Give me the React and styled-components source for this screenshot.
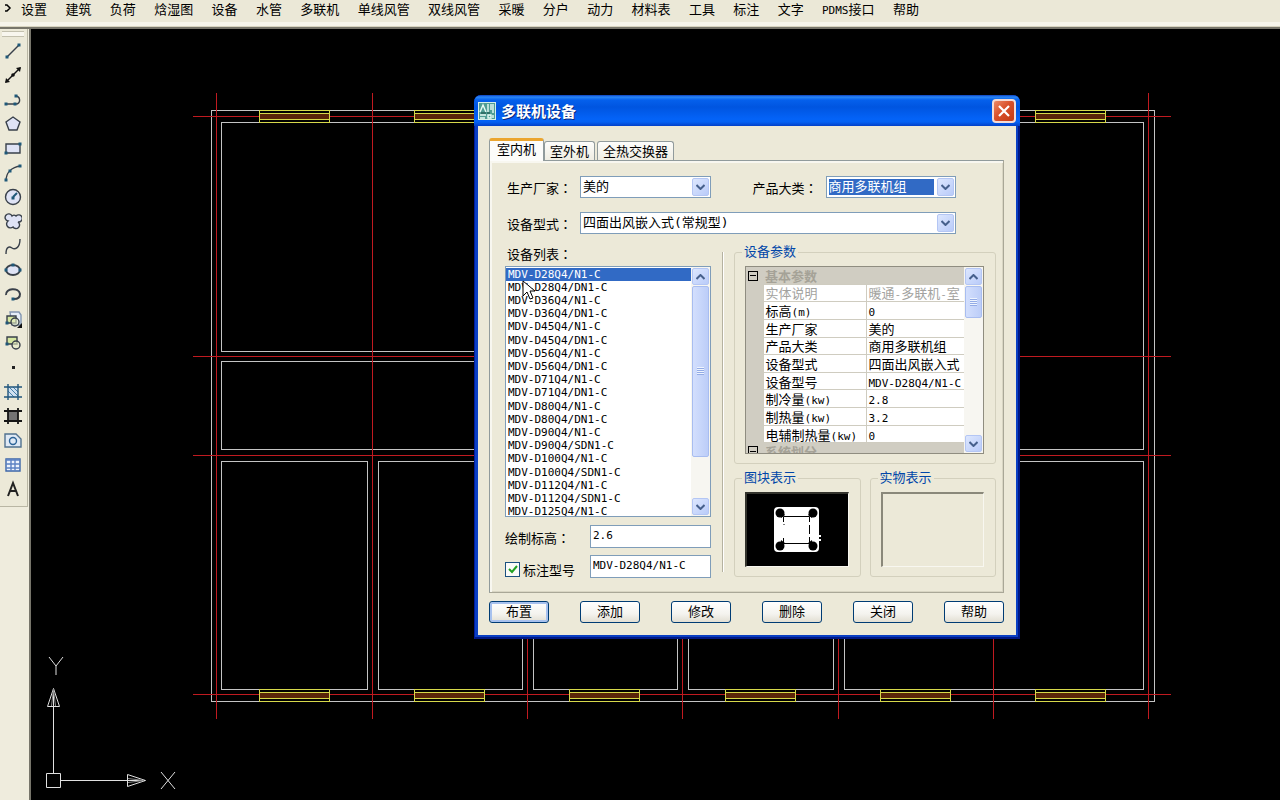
import React from 'react';
import styled, { createGlobalStyle, css } from 'styled-components';

const GlobalStyle = createGlobalStyle`
  * {
    box-sizing: border-box;
  }
  body {
    margin: 0;
    background: #000;
    color: #000;
    font-family: "Noto Sans CJK SC", "Liberation Sans", sans-serif;
    font-size: 13px;
    line-height: 16px;
    overflow: hidden;
  }
  button, input, select {
    font: inherit;
    color: inherit;
    margin: 0;
  }
`;

const mono = css`
  font-family: "DejaVu Sans Mono", "Noto Sans CJK SC", monospace;
`;

const Page = styled.div`
  display: flex;
  flex-direction: column;
  height: 100vh;
`;

/* ---------- menu ---------- */

const MenuBar = styled.header`
  display: flex;
  height: 29px;
  padding: 0 0 0 4px;
  background: linear-gradient(#ebe8d7 0 22px, #f6f4ea 22px 26px, #d8d4c0 26px);
  border-bottom: 2px solid #77756a;
`;

const MenuArrow = styled.svg`
  flex: none;
  width: 8px;
  height: 14px;
  margin: 1px 9px 0 0;
`;

const MenuItems = styled.nav`
  display: flex;
  justify-content: space-between;
  width: 898px;
  height: 17px;
`;

const MenuButton = styled.button`
  border: 0;
  padding: 0;
  background: none;
  line-height: 16px;
  white-space: nowrap;
`;

const Latin = styled.span`
  ${mono}
  font-size: 11px;
  line-height: 1;
`;

/* ---------- work area ---------- */

const Work = styled.div`
  display: flex;
  flex: 1;
  min-height: 0;
`;

const Side = styled.aside`
  flex: none;
  width: 31px;
  background: #efecdd;
  border-right: 2px solid #77756a;
`;

const ToolBar = styled.div`
  display: flex;
  flex-direction: column;
  width: 28px;
  padding: 2px 3px 6px 2px;
  background: #ece9d8;
  border-right: 1px solid #b9b6a4;
  border-bottom: 1px solid #b9b6a4;
`;

const Grip = styled.div`
  height: 6px;
  margin-bottom: 3px;
  border: 1px solid #c3c0ae;
  border-width: 1px 0;
  background: #f8f6ee;
`;

const Tools = styled.div`
  display: flex;
  flex-direction: column;
  justify-content: space-between;
  align-items: center;
  height: 460px;
`;

const ToolButton = styled.button`
  width: 22px;
  height: 22px;
  padding: 2px;
  border: 0;
  background: none;
  svg {
    display: block;
    width: 18px;
    height: 18px;
    fill: none;
    stroke: #39404a;
    stroke-width: 1.4;
  }
`;

const Canvas = styled.main`
  position: relative;
  flex: 1;
  background: #000;
  overflow: hidden;
`;

const Plan = styled.svg`
  display: block;
  width: 100%;
  height: 100%;
`;

/* ---------- dialog ---------- */

const Dialog = styled.section`
  position: absolute;
  left: 443px;
  top: 66px;
  width: 546px;
  padding: 0 4px 4px;
  border-radius: 7px 7px 0 0;
  background: #0a3fc4;
  box-shadow: inset 1px 0 #001c9c, inset -2px -2px #001884;
`;

const TitleBar = styled.div`
  display: flex;
  align-items: center;
  height: 31px;
  margin: 0 -4px;
  padding: 0 4px;
  border-radius: 7px 7px 0 0;
  background: linear-gradient(#0b3fc0 0, #2a86f5 2px, #0560ec 5px, #0055e0 12px, #0463f8 24px, #0561f2 27px, #0340c8 31px);
`;

const Title = styled.h1`
  flex: 1;
  margin: 0 0 0 5px;
  color: #fff;
  font-size: 15px;
  font-weight: 700;
  text-shadow: 1px 1px #0a2a80;
`;

const CloseButton = styled.button`
  display: flex;
  align-items: center;
  justify-content: center;
  width: 24px;
  height: 24px;
  padding: 0;
  border: 2px solid #f4dcd6;
  border-radius: 4px;
  background: linear-gradient(135deg, #ec8a68, #d9502a 45%, #c23a14);
`;

const Body = styled.div`
  padding: 12px 12px 12px 11px;
  background: #ece9d8;
`;

const Tabs = styled.div`
  display: flex;
  align-items: flex-end;
  height: 22px;
`;

const Tab = styled.button`
  height: 19px;
  margin-right: 2px;
  padding: 0 5px;
  border: 1px solid #919b9c;
  border-bottom: 0;
  border-radius: 3px 3px 0 0;
  background: linear-gradient(#fdfdfb, #efede2);
  line-height: 16px;
  ${({ $active }) => $active && css`
    position: relative;
    height: 23px;
    margin: 0 0 -1px;
    padding: 0 7px 4px;
    border-top: 3px solid #eba52f;
    background: #fcfcfa;
  `}
`;

const Panel = styled.div`
  padding: 15px 7px 14px 15px;
  border: 1px solid #919b9c;
  border-color: #919b9c #a9a797 #a9a797 #919b9c;
  background: #ece9d8;
  box-shadow: inset 2px 2px #f8f7f0, inset -1px -1px #d9d6c4;
`;

const FormRow = styled.div`
  display: flex;
  align-items: center;
  margin-bottom: ${({ $last }) => ($last ? 12 : 14)}px;
`;

const Label = styled.label`
  flex: none;
  width: ${({ $wide }) => ($wide ? 85 : 75)}px;
  padding-left: ${({ $wide }) => ($wide ? 0 : 2)}px;
  padding-top: 2px;
`;

/* full-width colon sits in the middle of its square */
const Colon = styled.span`
  font-family: "Noto Sans CJK TC", sans-serif;
  line-height: 1;
`;

const SelectBox = styled.div`
  position: relative;
  width: ${({ $wide }) => ($wide ? 376 : 131)}px;
  margin-right: ${({ $wide }) => ($wide ? 0 : 40)}px;
`;

const Select = styled.select`
  ${mono}
  display: block;
  width: 100%;
  height: 22px;
  padding: 2px 21px 2px 2px;
  border: 1px solid #7f9db9;
  border-radius: 0;
  outline: 0;
  appearance: none;
  background: #fff;
  line-height: 16px;
  ${({ $focused }) => $focused && css`
    color: #fff;
    background: linear-gradient(#316ac5, #316ac5) content-box, #fff;
  `}
`;

const arrowFace = css`
  display: flex;
  align-items: center;
  justify-content: center;
  border: 1px solid #b4c6f4;
  border-radius: 2px;
  background: linear-gradient(135deg, #dde7fe, #b9cbf9);
`;

const SelectArrow = styled.span`
  ${arrowFace}
  position: absolute;
  top: 2px;
  right: 2px;
  width: 17px;
  height: 18px;
  pointer-events: none;
`;

const Columns = styled.div`
  display: grid;
  grid-template-columns: 206px 1px 1fr;
  column-gap: 11px;
`;

const Divider = styled.div`
  margin: 6px 0;
  background: #b5b2a0;
  box-shadow: 1px 0 #fff;
`;

const LeftColumn = styled.div`
  display: flex;
  flex-direction: column;
`;

const ListLabel = styled.label`
  height: 16px;
  margin-bottom: 4px;
  padding-left: 2px;
`;

const ListFrame = styled.div`
  display: flex;
  height: 251px;
  margin-bottom: 8px;
  border: 1px solid #7f9db9;
  background: #fff;
`;

const List = styled.select`
  ${mono}
  flex: 1;
  height: 249px;
  padding: 1px 0;
  border: 0;
  outline: 0;
  overflow: hidden;
  background: #fff;
  font-size: 11px;
  scrollbar-width: none;
  option {
    height: 13px;
    min-height: 13px;
    padding: 0 2px;
    line-height: 13px;
  }
  option:nth-child(5n) {
    height: 14px;
  }
  option:checked {
    color: #fff;
    background: #316ac5 linear-gradient(#316ac5, #316ac5);
  }
`;

const ScrollBar = styled.div`
  display: flex;
  flex-direction: column;
  flex: none;
  width: 19px;
  padding: 1px;
  background: #f7f6f1;
`;

const ScrollButton = styled.button`
  ${arrowFace}
  flex: none;
  width: 17px;
  height: 17px;
  padding: 0;
`;

const ScrollTrack = styled.div`
  flex: 1;
  padding: 1px 0;
`;

const ScrollThumb = styled.div`
  display: flex;
  align-items: center;
  justify-content: center;
  height: ${({ $size }) => $size};
  border: 1px solid #a8bdf0;
  border-radius: 2px;
  background: linear-gradient(90deg, #d3dffd, #bccdf8);
  &::before {
    content: "";
    width: 7px;
    height: 8px;
    background: repeating-linear-gradient(#eef4fe 0 1px, #93abe6 1px 2px);
  }
`;

const InputRow = styled.div`
  display: flex;
  align-items: center;
  & + & {
    margin-top: 7px;
  }
`;

const CheckLabel = styled.label`
  display: flex;
  align-items: center;
  gap: 3px;
  flex: none;
  width: 85px;
  padding-top: 6px;
`;

const CheckBox = styled.input`
  appearance: none;
  width: 15px;
  height: 15px;
  border: 1px solid #1c5180;
  background: #fbfbf8 url("data:image/svg+xml,%3Csvg xmlns='http://www.w3.org/2000/svg' viewBox='0 0 13 13'%3E%3Cpath d='M3 6l3 3 5-6' fill='none' stroke='%2321a121' stroke-width='2'/%3E%3C/svg%3E");
`;

const TextInput = styled.input`
  ${mono}
  flex: 1;
  min-width: 0;
  height: 23px;
  padding: 0 2px 3px;
  border: 1px solid #7f9db9;
  background: #fff;
  && {
    font-size: 11px;
  }
`;

const RightColumn = styled.div`
  display: grid;
  grid-template-columns: 1fr 1fr;
  align-content: start;
  gap: 8px 9px;
`;

const Group = styled.fieldset`
  min-width: 0;
  margin: 0;
  padding: 7px 11px 9px 10px;
  border: 1px solid #d3d0bd;
  border-radius: 3px;
  ${({ $full }) => $full && 'grid-column: 1 / -1;'}
`;

const Legend = styled.legend`
  height: 13px;
  margin-left: -3px;
  padding: 0 2px;
  color: #0046a8;
  line-height: 10px;
`;

const GridFrame = styled.div`
  display: flex;
  height: 188px;
  border: 1px solid #8f8d80;
  overflow: hidden;
  background: #fff;
`;

const ParamTable = styled.table`
  flex: 1;
  min-width: 0;
  height: 193px;
  table-layout: fixed;
  border-collapse: collapse;
  td, th {
    height: 15px;
    padding: 0 0 0 2px;
    font-weight: 400;
    line-height: 15px;
    text-align: left;
    white-space: nowrap;
  }
`;

const Gutter = styled.col`
  width: 17px;
`;

const NameCol = styled.col`
  width: 103px;
`;

const GroupRow = styled.tr`
  background: #d0cdc2;
  && th {
    color: #a5a297;
    font-weight: 700;
  }
`;

const ParamRow = styled.tr`
  color: ${({ $muted }) => ($muted ? '#a3a3a0' : '#000')};
  td:first-child {
    background: #d0cdc2;
  }
  th, td:last-child {
    border: 1px solid #cfccc0;
    border-right: 0;
  }
`;

const Toggle = styled.button`
  display: block;
  width: 10px;
  height: 10px;
  padding: 0;
  border: 1px solid #000;
  background: none;
  &::before {
    content: "";
    display: block;
    height: 1px;
    margin: 0 1px;
    background: #000;
  }
`;

const Preview = styled.div`
  display: flex;
  justify-content: center;
  align-items: center;
  height: 75px;
  background: ${({ $dark }) => ($dark ? '#000' : '#ece9d8')};
  border: 1px solid #f8f7f0;
  border-top: 2px solid ${({ $dark }) => ($dark ? '#33332c' : '#8a887a')};
  border-left: 2px solid ${({ $dark }) => ($dark ? '#33332c' : '#8a887a')};
`;

const Buttons = styled.div`
  display: flex;
  justify-content: space-between;
  margin-top: 8px;
`;

const PushButton = styled.button`
  width: 60px;
  height: 22px;
  padding: 0 0 2px;
  border: 1px solid #003c74;
  border-radius: 3px;
  background: linear-gradient(#fff, #f4f3ee 60%, #e2dfd3);
  line-height: 18px;
  ${({ $primary }) => $primary && 'box-shadow: inset 0 0 0 2px #a7c1ee;'}
`;

const Cursor = styled.svg`
  position: absolute;
  left: 48px;
  top: 185px;
  width: 14px;
  height: 22px;
  pointer-events: none;
`;

const menuItems = [
  '设置', '建筑', '负荷', '焓湿图', '设备', '水管', '多联机', '单线风管', '双线风管',
  '采暖', '分户', '动力', '材料表', '工具', '标注', '文字', 'PDMS接口', '帮助',
];

const models = [
  'MDV-D28Q4/N1-C', 'MDV-D28Q4/DN1-C', 'MDV-D36Q4/N1-C', 'MDV-D36Q4/DN1-C',
  'MDV-D45Q4/N1-C', 'MDV-D45Q4/DN1-C', 'MDV-D56Q4/N1-C', 'MDV-D56Q4/DN1-C',
  'MDV-D71Q4/N1-C', 'MDV-D71Q4/DN1-C', 'MDV-D80Q4/N1-C', 'MDV-D80Q4/DN1-C',
  'MDV-D90Q4/N1-C', 'MDV-D90Q4/SDN1-C', 'MDV-D100Q4/N1-C', 'MDV-D100Q4/SDN1-C',
  'MDV-D112Q4/N1-C', 'MDV-D112Q4/SDN1-C', 'MDV-D125Q4/N1-C',
];

const params = [
  ['实体说明', '暖通-多联机-室'],
  ['标高(m)', '0'],
  ['生产厂家', '美的'],
  ['产品大类', '商用多联机组'],
  ['设备型式', '四面出风嵌入式'],
  ['设备型号', 'MDV-D28Q4/N1-C'],
  ['制冷量(kw)', '2.8'],
  ['制热量(kw)', '3.2'],
  ['电辅制热量(kw)', '0'],
];

const Dot = ({ x, y }) => <rect x={x - 1.5} y={y - 1.5} width="3" height="3" fill="#1f5878" stroke="none" />;

const tools = [
  ['直线', <><path d="M3 15L15 3" /><Dot x={3} y={15} /><Dot x={15} y={3} /></>],
  ['构造线', <><path d="M2 16L16 2" stroke="#111" /><path d="M1 17l1-5 4 4zM17 1l-5 1 4 4z" fill="#111" stroke="none" /><circle cx="9" cy="9" r="1.8" fill="#111" stroke="none" /></>],
  ['多段线', <><path d="M2 13h10c5 0 5-8-1-8" /><Dot x={2} y={13} /><Dot x={11} y={13} /><Dot x={12} y={5} /></>],
  ['正多边形', <path d="M9 2l7 5-3 8H5L2 7z" fill="#dfe3f5" />],
  ['矩形', <><path d="M2 5h14v9H2z" fill="#dfe3f5" /><Dot x={2} y={14} /><Dot x={16} y={5} /></>],
  ['圆弧', <><path d="M2 17C2 9 7 3 17 2" /><Dot x={2} y={16} /><Dot x={6} y={7} /><Dot x={16} y={2} /></>],
  ['圆', <><circle cx="9" cy="9" r="7.5" fill="#dfe3f5" /><path d="M9 9l4-4" stroke="#1f5878" strokeWidth="2" /><Dot x={9} y={10} /></>],
  ['修订云线', <path d="M8 4A3.6 3.6 0 1 0 4 9a3.6 3.6 0 1 0 5 6 3.6 3.6 0 1 0 5-5 3.6 3.6 0 1 0-2-6 3 3 0 0 0-4 0z" fill="#dfe3f5" />],
  ['样条曲线', <path d="M2 17c0-7 3-8 6-6s8 0 8-9" />],
  ['椭圆', <><ellipse cx="9" cy="9" rx="7" ry="5" fill="#dfe3f5" strokeWidth="2" /><Dot x={2} y={9} /><Dot x={9} y={4} /><Dot x={16} y={9} /></>],
  ['椭圆弧', <><path d="M2 10c-1-7 13-8 14-1 0 4-3 5-6 5" strokeWidth="2" /><Dot x={9} y={14} /></>],
  ['插入块', <><path d="M6 2h9l2 3v10H8z" fill="#e6eef8" stroke="#8295b0" /><path d="M3 6h9v7H3z" fill="#d5e7a0" /><circle cx="11" cy="12" r="4" fill="#e9f0c8" fillOpacity=".6" /><Dot x={3} y={13} /><path d="M18 13v5h-5z" fill="#111" stroke="none" /></>],
  ['创建块', <><path d="M3 3h10v7H3z" fill="#d5e7a0" /><circle cx="12" cy="11" r="4" fill="#e9f0c8" fillOpacity=".6" /><Dot x={3} y={10} /></>],
  ['点', <rect x="8" y="8" width="3" height="3" fill="#222" stroke="none" />],
  ['图案填充', <><path d="M4 4h10v10H4z" fill="#cfe0f0" stroke="none" /><path d="M5 4l9 9M9 4l5 5M4 8l6 6" stroke="#4680aa" strokeWidth="1" /><path d="M4 1v16M14 1v16M0 4h18M0 14h18" stroke="#20557c" /></>],
  ['渐变色', <><path d="M4 4h10v10H4z" fill="#737373" stroke="none" /><path d="M4 1v16M14 1v16M0 4h18M0 14h18" stroke="#161616" strokeWidth="1.8" /></>],
  ['面域', <><path d="M1 3h11l5 5v8H1z" fill="#dfe9f5" stroke="#50718f" /><circle cx="9" cy="10" r="3.5" stroke="#2c6498" /></>],
  ['表格', <><path d="M2 3h14v12H2z" fill="#eef4fd" stroke="#3c65a8" /><path d="M2 4h14M2 8h14M2 12h14M7 3v12M11 3v12" stroke="#5c82c4" /></>],
  ['多行文字', <path d="M4 16L9 3l5 13M6 11h6" stroke="#222" strokeWidth="2" />],
];

// [x, top end]: the inner axes only cross the lower rooms
const axisX = [[216, 93], [372, 93], [527, 455], [682, 455], [838, 455], [993, 455], [1148, 93]];
const axisY = [116, 356, 455, 694];
const windowsX = [259, 414, 569, 725, 880, 1035];
const rooms = [
  [221, 461, 146], [378, 461, 144], [533, 461, 144], [688, 461, 145], [844, 461, 299],
];

const Chevron = ({ up }) => (
  <svg width="9" height="6" viewBox="0 0 9 6">
    <path d={up ? 'M0.5 5l4-4 4 4' : 'M0.5 1l4 4 4-4'} fill="none" stroke="#46608c" strokeWidth="2" />
  </svg>
);

const Mixed = ({ text }) =>
  text.split(/([\x21-\x7e]+)/).map((part, i) => (i % 2 ? <Latin key={i}>{part}</Latin> : part));

const WallWindow = ({ x, y }) => (
  <g stroke="#d6d84a">
    <rect x={x + 0.5} y={y + 3.5} width="70" height="6" fill="#5a2408" />
    <rect x={x + 0.5} y={y + 0.5} width="70" height="12" fill="none" />
  </g>
);

const FloorPlan = () => (
  <Plan viewBox="31 29 1249 771" preserveAspectRatio="xMinYMin meet" shapeRendering="crispEdges">
    <g stroke="#c4c4c4" fill="none">
      <rect x="211.5" y="110.5" width="943" height="591" />
      <path d="M480 351.5H221.5V122.5H1143.5V449.5H221.5V361.5H480" />
      {rooms.map(([x, y, w]) => <rect key={x} x={x + 0.5} y={y + 0.5} width={w} height="228" />)}
    </g>
    <g stroke="#c01a20">
      {axisX.map(([x, top]) => <path key={x} d={`M${x + 0.5} ${top}V719`} />)}
      {axisY.map((y) => <path key={y} d={`M193 ${y + 0.5}H1171`} />)}
    </g>
    {windowsX.map((x) => (
      <g key={x}>
        <WallWindow x={x} y={110} />
        <WallWindow x={x} y={689} />
      </g>
    ))}
    <g stroke="#e0e0e0" fill="none" shapeRendering="auto">
      <path d="M46.5 773.5h14v14h-14zM53.5 773V690M61 780.5h84M47.5 706.5l6-18 6 18zM127.5 774.5l18 6-18 6z" />
      <path d="M51.5 706l2-17 2 17M128 778.5l16 2-16 2" stroke="#888" />
      <path d="M49 657l7 9 7-9M56 666v9M161 772l14 17M175 772l-14 17" />
    </g>
  </Plan>
);

const Combo = ({ id, value, wide, focused }) => (
  <SelectBox $wide={wide}>
    <Select id={id} $focused={focused} defaultValue={value}>
      <option>{value}</option>
    </Select>
    <SelectArrow><Chevron /></SelectArrow>
  </SelectBox>
);

const Scroll = ({ size }) => (
  <ScrollBar>
    <ScrollButton aria-label="向上"><Chevron up /></ScrollButton>
    <ScrollTrack><ScrollThumb $size={size} /></ScrollTrack>
    <ScrollButton aria-label="向下"><Chevron /></ScrollButton>
  </ScrollBar>
);

const ParamGrid = () => (
  <GridFrame>
    <ParamTable>
      <colgroup><Gutter /><NameCol /><col /></colgroup>
      <tbody>
        <GroupRow>
          <td><Toggle aria-label="折叠" /></td>
          <th colSpan="2">基本参数</th>
        </GroupRow>
        {params.map(([name, value], i) => (
          <ParamRow key={name} $muted={i === 0}>
            <td />
            <th scope="row"><Mixed text={name} /></th>
            <td><Mixed text={value} /></td>
          </ParamRow>
        ))}
        <GroupRow>
          <td><Toggle aria-label="折叠" /></td>
          <th colSpan="2">系统划分</th>
        </GroupRow>
      </tbody>
    </ParamTable>
    <Scroll size="32px" />
  </GridFrame>
);

const BlockSymbol = () => (
  <svg width="50" height="48" viewBox="0 0 50 48">
    <rect x="2" y="1" width="45" height="45" rx="4" fill="#fff" />
    <g fill="#000">
      <circle cx="8" cy="7" r="4.5" />
      <circle cx="41" cy="7" r="4.5" />
      <circle cx="8" cy="40" r="4.5" />
      <circle cx="41" cy="40" r="4.5" />
      <path d="M8 3l5 6-4 3zM41 3l-5 6 4 3zM8 44l5-7-4-3zM41 44l-5-7 4-3z" />
    </g>
    <path d="M11.5 16v-5.5h26V16M37.5 19v9M37.5 31v6.5h-26V32M12 18v1" fill="none" stroke="#000" />
    <path d="M47 29h2v2h-2zM47 33h2v2h-2z" fill="#fff" />
  </svg>
);

const AppIcon = () => (
  <svg width="18" height="18" viewBox="0 0 18 18">
    <path d="M0 0h18v18H0z" fill="#d5eee8" />
    <path d="M1 1h16v16H1z" fill="#4f9d95" />
    <path d="M2 10l3-7 3 7M10 2v8M13 2v6M15 2v9M2 13h6M2 16h5M10 13h3v3h-3zM15 13v3" fill="none" stroke="#e9fbf6" strokeWidth="1.4" />
    <path d="M3 11h5M9 11h3" stroke="#12443f" />
  </svg>
);

const DeviceDialog = () => (
  <Dialog role="dialog" aria-labelledby="dialog-title">
    <TitleBar>
      <AppIcon />
      <Title id="dialog-title">多联机设备</Title>
      <CloseButton aria-label="关闭">
        <svg width="12" height="12" viewBox="0 0 12 12">
          <path d="M1 1l10 10M11 1L1 11" stroke="#fff" strokeWidth="2.2" />
        </svg>
      </CloseButton>
    </TitleBar>
    <Body>
      <Tabs role="tablist">
        <Tab role="tab" aria-selected="true" $active>室内机</Tab>
        <Tab role="tab">室外机</Tab>
        <Tab role="tab">全热交换器</Tab>
      </Tabs>
      <Panel>
        <FormRow>
          <Label htmlFor="maker">生产厂家<Colon>：</Colon></Label>
          <Combo id="maker" value="美的" />
          <Label htmlFor="category">产品大类<Colon>：</Colon></Label>
          <Combo id="category" value="商用多联机组" focused />
        </FormRow>
        <FormRow $last>
          <Label htmlFor="type">设备型式<Colon>：</Colon></Label>
          <Combo id="type" value="四面出风嵌入式(常规型)" wide />
        </FormRow>
        <Columns>
          <LeftColumn>
            <ListLabel htmlFor="models">设备列表<Colon>：</Colon></ListLabel>
            <ListFrame>
              <List id="models" size="19" defaultValue={models[0]}>
                {models.map((m) => <option key={m}>{m}</option>)}
              </List>
              <Scroll size="81%" />
            </ListFrame>
            <InputRow>
              <Label htmlFor="height" $wide>绘制标高<Colon>：</Colon></Label>
              <TextInput id="height" defaultValue="2.6" />
            </InputRow>
            <InputRow>
              <CheckLabel>
                <CheckBox type="checkbox" defaultChecked />
                标注型号
              </CheckLabel>
              <TextInput aria-label="标注型号" defaultValue="MDV-D28Q4/N1-C" />
            </InputRow>
          </LeftColumn>
          <Divider />
          <RightColumn>
            <Group $full>
              <Legend>设备参数</Legend>
              <ParamGrid />
            </Group>
            <Group>
              <Legend>图块表示</Legend>
              <Preview $dark><BlockSymbol /></Preview>
            </Group>
            <Group>
              <Legend>实物表示</Legend>
              <Preview />
            </Group>
          </RightColumn>
        </Columns>
      </Panel>
      <Buttons>
        <PushButton $primary>布置</PushButton>
        <PushButton>添加</PushButton>
        <PushButton>修改</PushButton>
        <PushButton>删除</PushButton>
        <PushButton>关闭</PushButton>
        <PushButton>帮助</PushButton>
      </Buttons>
    </Body>
    <Cursor viewBox="0 0 14 22">
      <path d="M1 1v15l4-4 3 7 3-1-3-7h5z" fill="#fff" stroke="#000" />
    </Cursor>
  </Dialog>
);

const App = () => (
  <Page>
    <GlobalStyle />
    <MenuBar>
      <MenuArrow viewBox="0 0 8 14">
        <path d="M1 4h2l3 3-3 3H1" fill="none" stroke="#000" strokeWidth="1.5" />
      </MenuArrow>
      <MenuItems>
        {menuItems.map((item) => (
          <MenuButton key={item}><Mixed text={item} /></MenuButton>
        ))}
      </MenuItems>
    </MenuBar>
    <Work>
      <Side>
        <ToolBar>
          <Grip />
          <Tools>
            {tools.map(([name, shape]) => (
              <ToolButton key={name} aria-label={name}>
                <svg viewBox="0 0 18 18">{shape}</svg>
              </ToolButton>
            ))}
          </Tools>
        </ToolBar>
      </Side>
      <Canvas>
        <FloorPlan />
        <DeviceDialog />
      </Canvas>
    </Work>
  </Page>
);

export default App;
